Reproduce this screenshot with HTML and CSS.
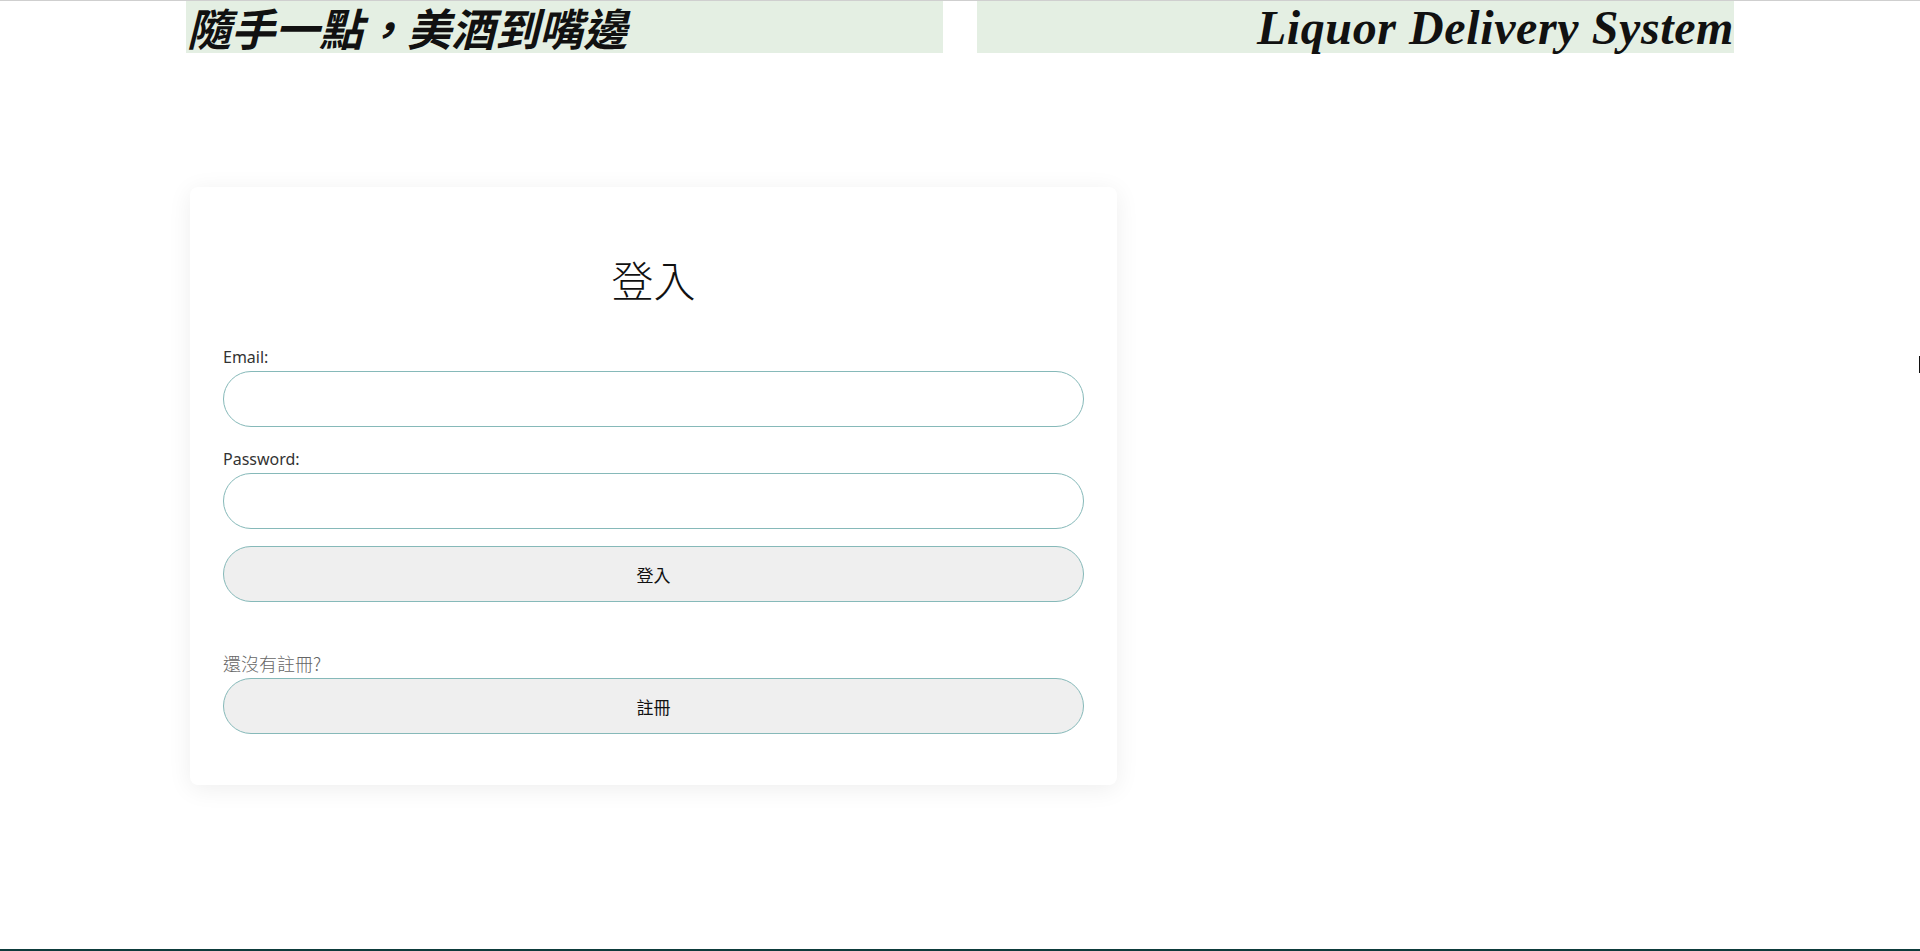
FILE: index.html
```html
<!DOCTYPE html>
<html lang="zh-Hant">
<head>
<meta charset="utf-8">
<title>Liquor Delivery System</title>
<link rel="stylesheet" href="styles.css">
</head>
<body>
<header class="top">
  <div class="banner banner-left"><h1 class="slogan">隨手一點，美酒到嘴邊</h1></div>
  <div class="banner banner-right"><h1 class="brand">Liquor Delivery System</h1></div>
</header>
<main class="main">
  <section class="card">
    <h2 class="title">登入</h2>
    <form class="form">
      <label class="label" for="email">Email:</label>
      <input class="field" id="email" type="email">
      <label class="label label-gap" for="pw">Password:</label>
      <input class="field" id="pw" type="password">
      <button class="btn btn-login" type="button">登入</button>
      <p class="hint">還沒有註冊?</p>
      <button class="btn" type="button">註冊</button>
    </form>
  </section>
</main>
<footer class="footer"></footer>
<span class="caret"></span>
</body>
</html>
```
FILE: styles.css
```css
html, body {
  margin: 0;
  padding: 0;
}
body {
  border-top: 1px solid #cfcfcf;
  background: #fff;
  font-family: "Noto Sans", "Noto Sans CJK TC", sans-serif;
  color: #222;
  position: relative;
  overflow: hidden;
}
.top {
  width: 1548px;
  margin: 0 auto;
  display: flex;
  gap: 34px;
}
.banner {
  flex: 1;
  background: #e4efe3;
  height: 52px;
}
.slogan {
  margin: 0;
  font-family: "Noto Sans CJK TC", sans-serif;
  font-size: 44px;
  line-height: 52px;
  font-weight: 700;
  font-style: italic;
  color: #111;
  padding-left: 1px;
  white-space: nowrap;
}
.brand {
  margin: 0;
  font-family: "Liberation Serif", "DejaVu Serif", serif;
  font-size: 48px;
  line-height: 54px;
  font-weight: 700;
  font-style: italic;
  color: #111;
  text-align: right;
  letter-spacing: 0.6px;
  white-space: nowrap;
}
.main {
  width: 1548px;
  margin: 134px auto 0;
}
.card {
  width: 927px;
  margin-left: 4px;
  box-sizing: border-box;
  padding: 33px 33px 51px;
  background: #fff;
  border-radius: 8px;
  box-shadow: 0 4px 24px rgba(0, 0, 0, 0.07);
}
.title {
  margin: 34px 0 41px;
  text-align: center;
  font-family: "Noto Sans CJK TC", sans-serif;
  font-weight: 300;
  font-size: 42px;
  line-height: 50px;
  color: #111;
}
.form {
  display: flex;
  flex-direction: column;
}
.label {
  font-size: 16px;
  line-height: 24px;
  color: #333;
  margin-bottom: 2px;
}
.label-gap {
  margin-top: 20px;
}
.field {
  box-sizing: border-box;
  height: 56px;
  width: 100%;
  border: 1px solid #86b9b9;
  border-radius: 28px;
  background: #fff;
  padding: 0 24px;
  font-size: 16px;
  outline: none;
}
.btn {
  box-sizing: border-box;
  height: 56px;
  width: 100%;
  border: 1px solid #86b9b9;
  border-radius: 28px;
  background: #efefef;
  font-family: "Noto Sans CJK TC", sans-serif;
  font-size: 17px;
  font-weight: 400;
  color: #111;
}
.btn-login {
  margin-top: 17px;
}
.hint {
  margin: 49px 0 3px;
  font-family: "Noto Sans CJK TC", sans-serif;
  font-weight: 300;
  font-size: 18px;
  line-height: 24px;
  color: #666;
}
.footer {
  margin-top: 164px;
  height: 60px;
  background: #0d3b3b;
}
.caret {
  position: absolute;
  top: 355px;
  right: 0;
  width: 1px;
  height: 17px;
  background: #111;
}
```
